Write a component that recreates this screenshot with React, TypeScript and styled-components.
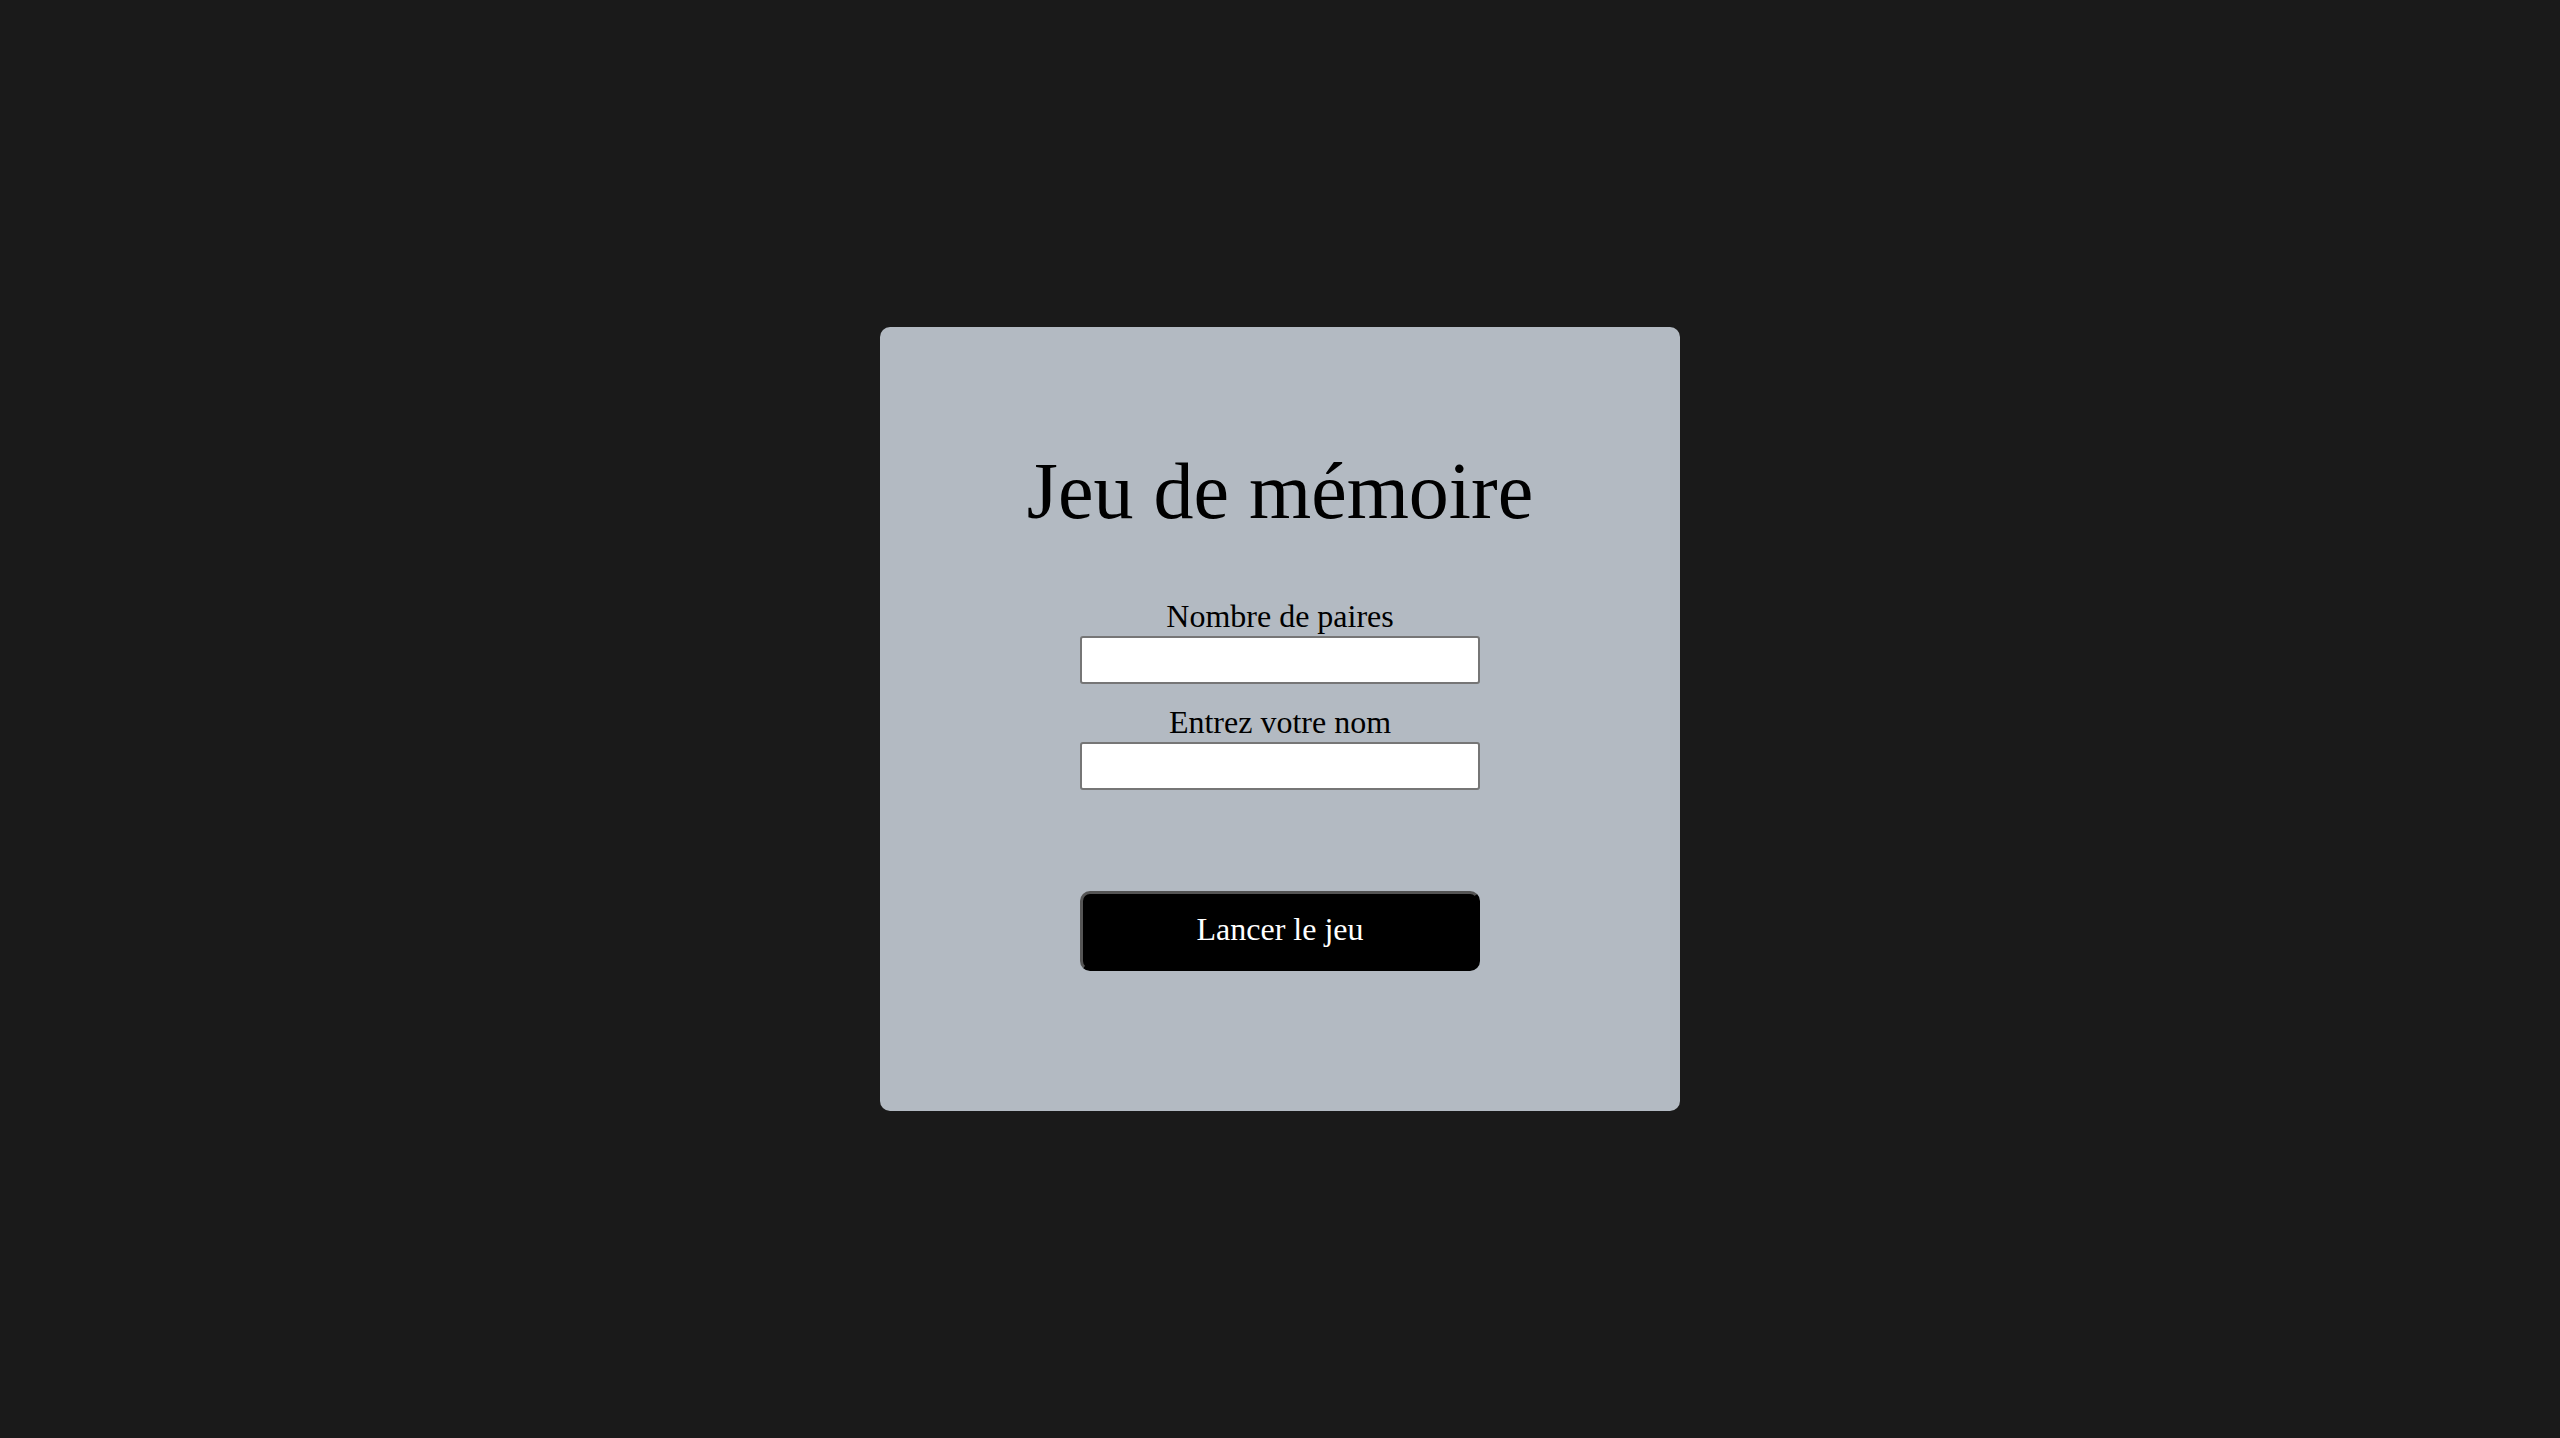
import React from "react";
import styled, { createGlobalStyle } from "styled-components";

const GlobalStyle = createGlobalStyle`
  html, body {
    margin: 0;
    padding: 0;
    background: #1a1a1a;
  }
  body {
    font-family: "Liberation Serif", "Times New Roman", serif;
  }
`;

const Screen = styled.main`
  width: 100vw;
  height: 100vh;
  display: flex;
  align-items: center;
  justify-content: center;
  background: #1a1a1a;
`;

const Card = styled.section`
  box-sizing: border-box;
  width: 800px;
  height: 784px;
  border-radius: 10px;
  background: #b3bac2;
  display: flex;
  flex-direction: column;
  align-items: center;
  padding-top: 118px;
`;

const Title = styled.h1`
  margin: 0 0 62px;
  font-family: "Liberation Serif", "Times New Roman", serif;
  font-weight: 400;
  font-size: 80px;
  line-height: 92px;
  color: #000;
`;

const Form = styled.form`
  display: flex;
  flex-direction: column;
  align-items: center;
  gap: 21px;
`;

const Field = styled.div`
  display: flex;
  flex-direction: column;
  align-items: center;
`;

const Label = styled.label`
  font-family: "Liberation Serif", "Times New Roman", serif;
  font-size: 32px;
  line-height: 34px;
  padding-bottom: 3px;
  color: #000;
`;

const Input = styled.input`
  box-sizing: border-box;
  width: 400px;
  height: 48px;
  margin: 0;
  padding: 0 8px;
  border: 2px solid #767676;
  border-radius: 3px;
  background: #fff;
  font-size: 24px;
  outline: none;
`;

const StartButton = styled.button`
  box-sizing: border-box;
  width: 400px;
  height: 80px;
  margin-top: 80px;
  padding: 0 0 3px;
  border-width: 3px;
  border-style: solid;
  border-color: #555 #000 #000 #555;
  border-radius: 10px;
  background: #000;
  color: #fff;
  font-family: "Liberation Serif", "Times New Roman", serif;
  font-size: 32px;
  cursor: pointer;
`;

export default function App() {
  return (
    <>
      <GlobalStyle />
      <Screen>
        <Card>
          <Title>Jeu de mémoire</Title>
          <Form onSubmit={(e) => e.preventDefault()}>
            <Field>
              <Label htmlFor="pairs">Nombre de paires</Label>
              <Input id="pairs" type="text" />
            </Field>
            <Field>
              <Label htmlFor="name">Entrez votre nom</Label>
              <Input id="name" type="text" />
            </Field>
            <StartButton type="submit">Lancer le jeu</StartButton>
          </Form>
        </Card>
      </Screen>
    </>
  );
}
